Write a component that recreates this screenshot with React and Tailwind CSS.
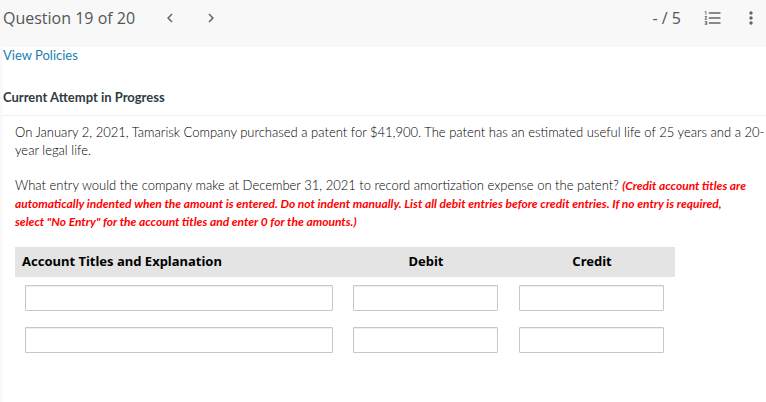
import React from "react";
import { MdChevronLeft, MdChevronRight, MdFormatListNumbered, MdMoreVert } from "react-icons/md";

const rows = [1, 2];

const field =
  "block h-[26px] w-full rounded-[1px] border border-[#c8c8c8] bg-white px-2 text-[13px] shadow-[inset_0_1px_1px_#eeeeee] outline-none";

function IconButton({ label, children }) {
  return (
    <button type="button" aria-label={label} className="flex size-6 items-center justify-center">
      {children}
    </button>
  );
}

function Header() {
  return (
    <header className="flex h-[47px] items-start justify-between bg-[#f8f8f8] pt-[6px] pr-[3px] pl-[3px] text-[#666666]">
      <div className="flex items-center">
        <h1 className="w-[155px] font-['Open_Sans',sans-serif] text-base leading-6 text-[#555555]">Question 19 of 20</h1>
        <div className="flex gap-[17px]">
          <IconButton label="Previous question">
            <MdChevronLeft size={18} />
          </IconButton>
          <IconButton label="Next question">
            <MdChevronRight size={18} />
          </IconButton>
        </div>
      </div>
      <div className="flex items-center">
        <span className="mr-5 font-['Open_Sans',sans-serif] text-base leading-6 text-[#555555]">- / 5</span>
        <div className="flex gap-[14px]">
          <IconButton label="Question list">
            <MdFormatListNumbered size={20} />
          </IconButton>
          <IconButton label="More options">
            <MdMoreVert size={20} />
          </IconButton>
        </div>
      </div>
    </header>
  );
}

function EntryTable() {
  return (
    <table className="mt-[17px] w-[660px] max-w-full table-fixed border-collapse">
      <colgroup>
        <col className="w-[328px]" />
        <col className="w-[166px]" />
        <col className="w-[166px]" />
      </colgroup>
      <thead className="bg-[#e4e4e4] font-['Noto_Sans',sans-serif] text-[13px] leading-5 text-black">
        <tr className="h-[30px]">
          <th scope="col" className="px-[7px] pb-[2px] text-left font-bold">Account Titles and Explanation</th>
          <th scope="col" className="pb-[2px] text-center font-bold">Debit</th>
          <th scope="col" className="pb-[2px] text-center font-bold">Credit</th>
        </tr>
      </thead>
      <tbody>
        {rows.map((row) => (
          <tr key={row} className="h-[42px]">
            <td className="px-[10px]">
              <input type="text" aria-label={`Account title ${row}`} className={field} />
            </td>
            <td className="pr-[11px] pl-[10px]">
              <input type="text" aria-label={`Debit ${row}`} className={field} />
            </td>
            <td className="pr-[11px] pl-[10px]">
              <input type="text" aria-label={`Credit ${row}`} className={field} />
            </td>
          </tr>
        ))}
      </tbody>
    </table>
  );
}

export default function App() {
  return (
    <div className="flex min-h-screen flex-col bg-white font-['Lato',sans-serif] text-[13px] leading-[18px] text-[#2d3b45]">
      <Header />
      <main className="flex-1 border-l-[3px] border-[#f9f9f9]">
        <a href="#policies" className="block w-fit leading-4 text-[#1a7fb0]">View Policies</a>
        <h2 className="mt-[25px] border-b border-[#eeeeee] pb-[9px] font-bold">Current Attempt in Progress</h2>
        <div className="pt-[7px] pl-3">
          <p className="font-light text-black">
            On January 2, 2021, Tamarisk Company purchased a patent for $41,900. The patent has an estimated useful life
            of 25 years and a 20-year legal life.
          </p>
          <p className="mt-[17px] pr-4 font-light text-black">
            What entry would the company make at December 31, 2021 to record amortization expense on the patent?{" "}
            <strong className="text-xs leading-4 font-bold text-[#ff0000] italic">
              (Credit account titles are automatically indented when the amount is entered. Do not indent manually. List
              all debit entries before credit entries. If no entry is required, select "No Entry" for the account titles
              and enter 0 for the amounts.)
            </strong>
          </p>
          <EntryTable />
        </div>
      </main>
    </div>
  );
}
